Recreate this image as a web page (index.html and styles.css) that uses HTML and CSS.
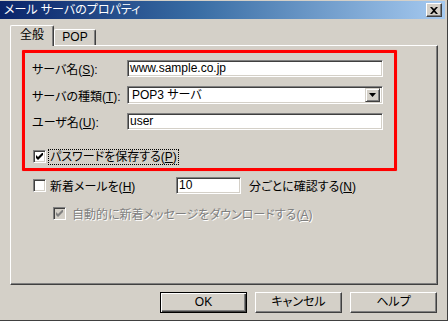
FILE: index.html
```html
<!DOCTYPE html>
<html lang="ja">
<head>
  <meta charset="UTF-8">
  <title>メール サーバのプロパティ</title>
  <link rel="stylesheet" href="styles.css">
</head>
<body>
  <div class="window">
    <div class="titlebar">
      <span class="title">メール サーバのプロパティ</span>
      <span class="close">
        <svg width="8" height="7" viewBox="0 0 8 7"><path d="M0 0h2l2 2 2-2h2L5 3.5 8 7H6L4 5 2 7H0l3-3.5z" fill="#000"/></svg>
      </span>
    </div>

    <div class="client">
      <div class="tabs">
        <div class="tab active">全般</div>
        <div class="tab">POP</div>
      </div>

      <div class="panel">
        <div class="highlight">
          <div class="row">
            <span class="label">サーバ名(<u>S</u>):</span>
            <div class="field">www.sample.co.jp</div>
          </div>
          <div class="row">
            <span class="label">サーバの種類(<u>T</u>):</span>
            <div class="field combo">
              <span>POP3 サーバ</span>
              <span class="drop">
                <svg width="7" height="4" viewBox="0 0 7 4"><path d="M0 0h7L3.5 4z" fill="#000"/></svg>
              </span>
            </div>
          </div>
          <div class="row">
            <span class="label">ユーザ名(<u>U</u>):</span>
            <div class="field">user</div>
          </div>
          <div class="check-row">
            <span class="box">
              <svg width="7" height="7" viewBox="0 0 7 7"><path d="M0 2v3l2 2 5-5V-1L2 4z" fill="#000"/></svg>
            </span>
            <span class="focus">パスワードを保存する(<u>P</u>)</span>
          </div>
        </div>

        <div class="poll-row">
          <span class="box"></span>
          <span class="poll-label">新着メールを(<u>H</u>)</span>
          <div class="field minutes">10</div>
          <span>分ごとに確認する(<u>N</u>)</span>
        </div>

        <div class="sub-row">
          <span class="box disabled">
            <svg width="7" height="7" viewBox="0 0 7 7"><path d="M0 2v3l2 2 5-5V-1L2 4z" fill="#808080"/></svg>
          </span>
          <span class="muted">自動的に新着メッセージをダウンロードする(<u>A</u>)</span>
        </div>
      </div>

      <div class="buttons">
        <div class="btn default">OK</div>
        <div class="btn">キャンセル</div>
        <div class="btn">ヘルプ</div>
      </div>
    </div>
  </div>
</body>
</html>
```

FILE: styles.css
```css
body, html {
  margin: 0;
  padding: 0;
  background: #d4d0c8;
}

body {
  font-family: "Liberation Sans", "Noto Sans CJK JP", sans-serif;
  font-size: 12px;
  font-feature-settings: "palt";
  color: #000;
}

u {
  text-decoration: underline;
  text-underline-offset: 1px;
}

.window {
  width: 448px;
  height: 321px;
  box-sizing: border-box;
  padding: 1px 2px 1px 0;
  border-right: 1px solid #404040;
  border-bottom: 1px solid #404040;
  background: #d4d0c8;
  overflow: hidden;
}

.titlebar {
  height: 18px;
  display: flex;
  align-items: center;
  justify-content: space-between;
  padding: 0 3px 0 4px;
  background: linear-gradient(to right, #0a246a, #3a6ea5 45%, #a6caf0);
}

.title {
  color: #fff;
  font-size: 12px;
  line-height: 18px;
}

.close {
  width: 16px;
  height: 14px;
  box-sizing: border-box;
  display: flex;
  align-items: center;
  justify-content: center;
  background: #d4d0c8;
  border: 1px solid;
  border-color: #fff #404040 #404040 #fff;
  box-shadow: inset -1px -1px #808080;
}

.client {
  padding: 6px 7px 0 10px;
}

.tabs {
  display: flex;
  align-items: flex-end;
  height: 20px;
}

.tab {
  width: 42px;
  height: 16px;
  box-sizing: border-box;
  text-align: center;
  line-height: 15px;
  border: 1px solid;
  border-color: #fff #404040 transparent #fff;
  border-bottom: 0;
  box-shadow: inset -1px 0 #808080;
  border-radius: 2px 2px 0 0;
  background: #d4d0c8;
}

.tab.active {
  width: 44px;
  height: 21px;
  line-height: 19px;
  margin-bottom: -1px;
  position: relative;
  z-index: 1;
}

.panel {
  height: 240px;
  box-sizing: border-box;
  border: 1px solid;
  border-color: #fff #404040 #404040 #fff;
  box-shadow: inset -1px -1px #808080;
  padding: 4px 40px 0 11px;
}

.highlight {
  border: 3px solid #f00;
  border-radius: 1px;
  box-shadow: 0 0 1px #ff6a6a;
  padding: 7px 11px 4px 7px;
}

.row {
  display: flex;
  align-items: center;
  margin-bottom: 9px;
}

.label {
  width: 95px;
  flex: none;
  white-space: nowrap;
}

.field {
  flex: 1;
  height: 17px;
  box-sizing: border-box;
  padding: 0 2px;
  line-height: 13px;
  background: #fff;
  border: 1px solid;
  border-color: #808080 #fff #fff #808080;
  box-shadow: inset 1px 1px #404040, inset -1px -1px #d4d0c8;
  padding-left: 2px;
  padding-top: 1px;
}

.combo {
  height: 18px;
  display: flex;
  align-items: center;
  justify-content: space-between;
  padding: 0 2px 0 4px;
}

.drop {
  width: 15px;
  height: 14px;
  box-sizing: border-box;
  display: flex;
  align-items: center;
  justify-content: center;
  background: #d4d0c8;
  border: 1px solid;
  border-color: #d4d0c8 #404040 #404040 #d4d0c8;
  box-shadow: inset 1px 1px #fff, inset -1px -1px #808080;
}

.check-row {
  display: flex;
  align-items: center;
  margin-top: 19px;
  height: 15px;
}

.box {
  width: 13px;
  height: 13px;
  flex: none;
  box-sizing: border-box;
  display: flex;
  align-items: center;
  justify-content: center;
  background: #fff;
  border: 1px solid;
  border-color: #808080 #fff #fff #808080;
  box-shadow: inset 1px 1px #404040, inset -1px -1px #d4d0c8;
}

.box.disabled {
  background: #d4d0c8;
}

.check-row .box {
  margin: 0 3px 0 1px;
}

.focus {
  outline: 1px dotted #000;
  padding: 0 1px;
  line-height: 14px;
}

.poll-row {
  display: flex;
  align-items: center;
  height: 17px;
  margin: 6px 0 0 11px;
}

.poll-label {
  margin-left: 4px;
  width: 126px;
}

.minutes {
  flex: none;
  width: 65px;
  margin-right: 8px;
}

.sub-row {
  display: flex;
  align-items: center;
  margin: 11px 0 0 31px;
}

.muted {
  color: #808080;
  text-shadow: 1px 1px #fff;
  margin-left: 6px;
}

.buttons {
  display: flex;
  justify-content: flex-end;
  gap: 8px;
  margin: 7px 1px 0 0;
}

.btn {
  width: 87px;
  height: 21px;
  box-sizing: border-box;
  text-align: center;
  line-height: 18px;
  border: 1px solid;
  border-color: #fff #404040 #404040 #fff;
  box-shadow: inset -1px -1px #808080;
}

.btn.default {
  border-color: #000;
  box-shadow: inset 1px 1px #fff, inset -1px -1px #404040, inset -2px -2px #808080;
}
```
